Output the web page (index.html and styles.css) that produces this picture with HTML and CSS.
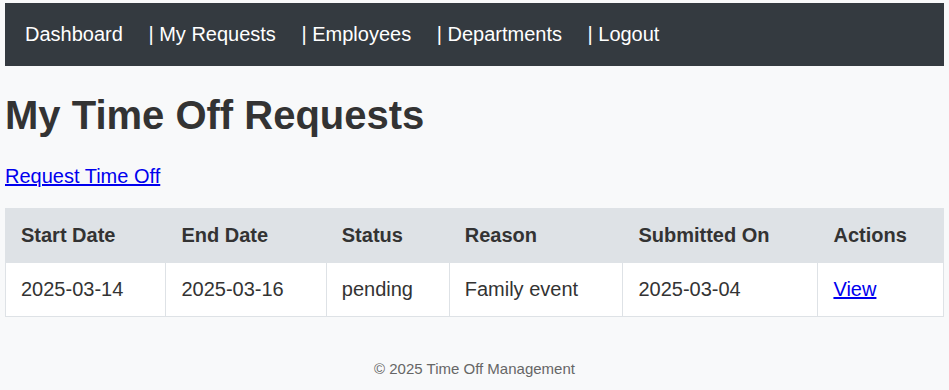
FILE: index.html
```html
<!DOCTYPE html>
<html>
<head>
  <title>My Time Off Requests</title>
  <link rel="stylesheet" href="styles.css">
</head>
<body>
  <nav class="navbar">
    <a href="#">Dashboard</a>
    <a href="#">| My Requests</a>
    <a href="#">| Employees</a>
    <a href="#">| Departments</a>
    <a href="#">| Logout</a>
  </nav>
  <h1>My Time Off Requests</h1>
  <p><a href="#" class="link">Request Time Off</a></p>
  <table class="requests">
    <thead>
      <tr>
        <th>Start Date</th>
        <th>End Date</th>
        <th>Status</th>
        <th>Reason</th>
        <th>Submitted On</th>
        <th>Actions</th>
      </tr>
    </thead>
    <tbody>
      <tr>
        <td>2025-03-14</td>
        <td>2025-03-16</td>
        <td>pending</td>
        <td>Family event</td>
        <td>2025-03-04</td>
        <td><a href="#" class="link">View</a></td>
      </tr>
    </tbody>
  </table>
  <footer class="footer">&copy; 2025 Time Off Management</footer>
</body>
</html>
```

FILE: styles.css
```css
body { font-family: Arial, "Liberation Sans", sans-serif; font-size: 20px; margin: 3px 5px 0; background-color: #f8f9fa; color: #333; }
.navbar { background-color: #343a40; padding: 20px; }
.navbar a { color: #fff; text-decoration: none; margin-right: 20px; }
h1 { font-size: 40px; margin: 27px 0; color: #333; }
p { margin: 20px 0; }
.link { color: #0000ee; }
.requests { width: 100%; border-collapse: collapse; background-color: #fff; }
.requests th, .requests td { border: 1px solid #dee2e6; padding: 15px; text-align: left; }
.requests th { background-color: #dee2e6; }
.footer { text-align: center; font-size: 15px; color: #666; margin: 0 -5px; padding: 43px 0 20px; }
```
